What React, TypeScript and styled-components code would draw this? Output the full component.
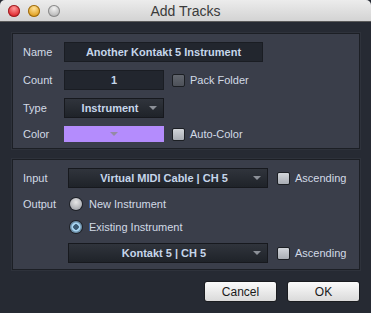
import styled, { createGlobalStyle } from "styled-components"

const Global = createGlobalStyle`
  html, body {
    margin: 0;
    padding: 0;
    background: #262a33;
  }
  body {
    font-family: "Liberation Sans", Arial, sans-serif;
  }
`

const Window = styled.div`
  width: 371px;
  height: 313px;
  display: flex;
  flex-direction: column;
  background: #262a33;
  overflow: hidden;
`

const TitleBar = styled.div`
  position: relative;
  height: 21px;
  flex: none;
  display: flex;
  align-items: center;
  justify-content: center;
  background: linear-gradient(#ececec, #d3d3d3);
  border-bottom: 1px solid #5a5a5a;
  border-radius: 5px 5px 0 0;
  font-size: 14px;
  color: #3a3a3a;
`

const Lights = styled.div`
  position: absolute;
  left: 8px;
  top: 5px;
  display: flex;
  gap: 8px;
`

const Light = styled.span<{ $c1: string; $c2: string; $edge: string }>`
  width: 12px;
  height: 12px;
  border-radius: 50%;
  background: radial-gradient(circle at 50% 30%, ${p => p.$c1}, ${p => p.$c2} 70%);
  box-shadow: inset 0 0 0 1px ${p => p.$edge};
`

const Body = styled.div`
  flex: 1;
  display: flex;
  flex-direction: column;
  padding: 11px 11px 0 12px;
  gap: 10px;
`

const Panel = styled.div<{ $gap: number }>`
  background: #3a3e4a;
  border: 1px solid #1c1f25;
  box-shadow: 0 0 0 1px #2e323b;
  display: flex;
  flex-direction: column;
  gap: ${p => p.$gap}px;
  padding: 8px 10px 6px 10px;
`

const Row = styled.div<{ $h?: number; $mt?: number }>`
  display: flex;
  align-items: center;
  height: ${p => p.$h ?? 20}px;
  margin-top: ${p => p.$mt ?? 0}px;
`

const Label = styled.div<{ $w: number }>`
  width: ${p => p.$w}px;
  flex: none;
  font-size: 11px;
  color: #d2dae6;
`

const Field = styled.div<{ $w: number }>`
  width: ${p => p.$w}px;
  height: 20px;
  box-sizing: border-box;
  background: #22262e;
  border: 1px solid #1a1d23;
  display: flex;
  align-items: center;
  justify-content: center;
  font-size: 11px;
  font-weight: bold;
  color: #c6d6ea;
`

const Dropdown = styled.div<{ $w: number }>`
  position: relative;
  width: ${p => p.$w}px;
  height: 20px;
  box-sizing: border-box;
  background: linear-gradient(#30343c, #1f2329);
  border: 1px solid #17191e;
  display: flex;
  align-items: center;
  justify-content: center;
  font-size: 11px;
  font-weight: bold;
  color: #c6d6ea;
  padding-right: 8px;
`

const Arrow = styled.span`
  position: absolute;
  right: 6px;
  top: 50%;
  margin-top: -2px;
  width: 0;
  height: 0;
  border-left: 4px solid transparent;
  border-right: 4px solid transparent;
  border-top: 4px solid #8c9098;
`

const Swatch = styled.div`
  width: 100px;
  height: 16px;
  background: #b48cfd;
  display: flex;
  align-items: center;
  justify-content: center;
`

const SwatchArrow = styled.span`
  width: 0;
  height: 0;
  border-left: 4px solid transparent;
  border-right: 4px solid transparent;
  border-top: 4px solid #948aa6;
`

const Check = styled.span<{ $light?: boolean; $ml: number }>`
  width: 13px;
  height: 13px;
  box-sizing: border-box;
  margin-left: ${p => p.$ml}px;
  margin-right: 5px;
  border: 1px solid #1c1f24;
  border-radius: 2px;
  background: ${p =>
    p.$light ? "linear-gradient(#d2d5da, #a9adb4)" : "linear-gradient(#62666e, #4d5159)"};
`

const CheckText = styled.span`
  font-size: 11px;
  color: #d2dae6;
`

const Radio = styled.span<{ $on?: boolean }>`
  width: 12px;
  height: 12px;
  border-radius: 50%;
  box-sizing: border-box;
  margin-right: 7px;
  margin-left: 2px;
  background: ${p =>
    p.$on
      ? "radial-gradient(circle, #3b5a72 0 2.5px, #a9d6f2 3px 4px, #6c8fa8 5px)"
      : "radial-gradient(circle at 50% 35%, #e6e6e6, #a9abb0 75%)"};
  box-shadow: 0 0 0 1px #1e2127;
`

const Footer = styled.div`
  display: flex;
  justify-content: flex-end;
  gap: 10px;
  margin-top: 1px;
`

const Button = styled.button`
  width: 73px;
  height: 21px;
  border: 1px solid #1a1c20;
  border-radius: 3px;
  background: linear-gradient(#fbfbfb, #dadada);
  font-family: "Liberation Sans", Arial, sans-serif;
  font-size: 12px;
  color: #1a1a1a;
  padding: 0;
`

export default function App() {
  return (
    <Window>
      <Global />
      <TitleBar>
        <Lights>
          <Light $c1="#ff9a9a" $c2="#e0282e" $edge="#9a2226" />
          <Light $c1="#ffe29a" $c2="#e0a020" $edge="#9a6a14" />
          <Light $c1="#f2f2f2" $c2="#b8b8b8" $edge="#8a8a8a" />
        </Lights>
        Add Tracks
      </TitleBar>
      <Body>
        <Panel $gap={8}>
          <Row>
            <Label $w={41}>Name</Label>
            <Field $w={199}>Another Kontakt 5 Instrument</Field>
          </Row>
          <Row>
            <Label $w={41}>Count</Label>
            <Field $w={100}>1</Field>
            <Check $ml={8} />
            <CheckText>Pack Folder</CheckText>
          </Row>
          <Row>
            <Label $w={41}>Type</Label>
            <Dropdown $w={100}>
              Instrument
              <Arrow />
            </Dropdown>
          </Row>
          <Row $h={16}>
            <Label $w={41}>Color</Label>
            <Swatch>
              <SwatchArrow />
            </Swatch>
            <Check $ml={8} $light />
            <CheckText>Auto-Color</CheckText>
          </Row>
        </Panel>
        <Panel $gap={3}>
          <Row>
            <Label $w={45}>Input</Label>
            <Dropdown $w={200}>
              Virtual MIDI Cable | CH 5
              <Arrow />
            </Dropdown>
            <Check $ml={9} $light />
            <CheckText>Ascending</CheckText>
          </Row>
          <Row $mt={3}>
            <Label $w={45}>Output</Label>
            <Radio />
            <CheckText>New Instrument</CheckText>
          </Row>
          <Row>
            <Label $w={45} />
            <Radio $on />
            <CheckText>Existing Instrument</CheckText>
          </Row>
          <Row $mt={3}>
            <Label $w={45} />
            <Dropdown $w={200}>
              Kontakt 5 | CH 5
              <Arrow />
            </Dropdown>
            <Check $ml={9} $light />
            <CheckText>Ascending</CheckText>
          </Row>
        </Panel>
        <Footer>
          <Button>Cancel</Button>
          <Button>OK</Button>
        </Footer>
      </Body>
    </Window>
  )
}
